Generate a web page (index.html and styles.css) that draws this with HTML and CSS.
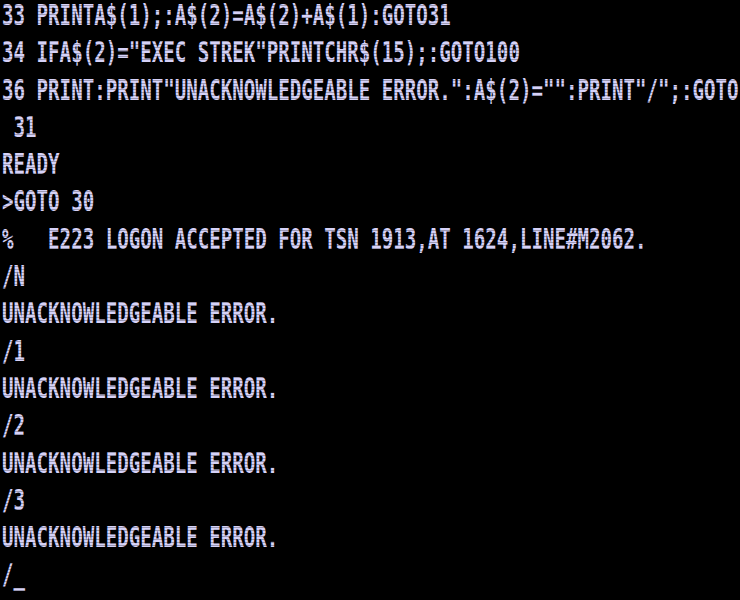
FILE: index.html
```html
<!DOCTYPE html>
<html lang="en">
<head>
<meta charset="utf-8">
<title>Terminal</title>
<link rel="stylesheet" href="styles.css">
</head>
<body>
<div class="crt">
<div class="screen">
<div class="line">33 PRINTA$(1);:A$(2)=A$(2)+A$(1):GOTO31</div>
<div class="line">34 IFA$(2)="EXEC STREK"PRINTCHR$(15);:GOTO100</div>
<div class="line">36 PRINT:PRINT"UNACKNOWLEDGEABLE ERROR.":A$(2)="":PRINT"/";:GOTO</div>
<div class="line"> 31</div>
<div class="line">READY</div>
<div class="line">&gt;GOTO 30</div>
<div class="line">%   E223 LOGON ACCEPTED FOR TSN 1913,AT 1624,LINE#M2062.</div>
<div class="line">/N</div>
<div class="line">UNACKNOWLEDGEABLE ERROR.</div>
<div class="line">/1</div>
<div class="line">UNACKNOWLEDGEABLE ERROR.</div>
<div class="line">/2</div>
<div class="line">UNACKNOWLEDGEABLE ERROR.</div>
<div class="line">/3</div>
<div class="line">UNACKNOWLEDGEABLE ERROR.</div>
<div class="line">/_</div>
</div>
</div>
</body>
</html>
```
FILE: styles.css
```css
html, body {
  margin: 0;
  padding: 0;
  background: #000;
}

.crt {
  position: relative;
  width: 740px;
  height: 600px;
  overflow: hidden;
  background: #000;
}

.crt::after {
  content: "";
  position: absolute;
  inset: 0;
  background: repeating-linear-gradient(
    to bottom,
    rgba(0, 0, 0, 0) 0,
    rgba(0, 0, 0, 0) 2px,
    rgba(0, 0, 0, 0.28) 2px,
    rgba(0, 0, 0, 0.28) 3px
  );
  pointer-events: none;
}

.screen {
  width: 1060px;
  margin-top: -3px;
  padding-left: 3px;
  font-family: "DejaVu Sans Mono", monospace;
  font-size: 27.5px;
  font-weight: bold;
  line-height: 37.3px;
  color: #d6d2f8;
  transform: scaleX(0.695);
  transform-origin: 0 0;
}

.line {
  white-space: pre;
  height: 37.3px;
}
```
